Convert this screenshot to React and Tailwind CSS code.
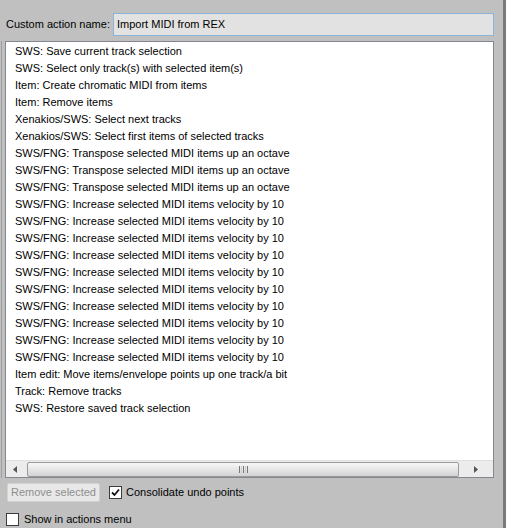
import React from "react";

const actions = [
  "SWS: Save current track selection",
  "SWS: Select only track(s) with selected item(s)",
  "Item: Create chromatic MIDI from items",
  "Item: Remove items",
  "Xenakios/SWS: Select next tracks",
  "Xenakios/SWS: Select first items of selected tracks",
  "SWS/FNG: Transpose selected MIDI items up an octave",
  "SWS/FNG: Transpose selected MIDI items up an octave",
  "SWS/FNG: Transpose selected MIDI items up an octave",
  "SWS/FNG: Increase selected MIDI items velocity by 10",
  "SWS/FNG: Increase selected MIDI items velocity by 10",
  "SWS/FNG: Increase selected MIDI items velocity by 10",
  "SWS/FNG: Increase selected MIDI items velocity by 10",
  "SWS/FNG: Increase selected MIDI items velocity by 10",
  "SWS/FNG: Increase selected MIDI items velocity by 10",
  "SWS/FNG: Increase selected MIDI items velocity by 10",
  "SWS/FNG: Increase selected MIDI items velocity by 10",
  "SWS/FNG: Increase selected MIDI items velocity by 10",
  "SWS/FNG: Increase selected MIDI items velocity by 10",
  "Item edit: Move items/envelope points up one track/a bit",
  "Track: Remove tracks",
  "SWS: Restore saved track selection",
];

function Checkbox({ checked }) {
  return (
    <div className="w-[13px] h-[13px] border border-[#3c3c3c] bg-white flex items-center justify-center shrink-0">
      {checked && (
        <svg width="9" height="9" viewBox="0 0 9 9">
          <path d="M1 4.5 L3.5 7 L8 1.5" stroke="#111" strokeWidth="1.8" fill="none" />
        </svg>
      )}
    </div>
  );
}

function HScrollbar() {
  return (
    <div className="h-[17px] flex items-center bg-[#ececec] border-t border-[#e0e0e0]">
      <div className="w-[17px] flex justify-center">
        <svg width="4" height="7" viewBox="0 0 4 7">
          <path d="M4 0 L0 3.5 L4 7 Z" fill="#555" />
        </svg>
      </div>
      <div className="ml-[4px] w-[432px] h-[15px] rounded-[2px] border border-[#9a9a9a] bg-gradient-to-b from-[#f6f6f6] via-[#e6e6e6] to-[#d2d2d2] flex items-center justify-center">
        <div className="flex gap-[1px]">
          <div className="w-[1px] h-[7px] bg-[#777]" />
          <div className="w-[1px] h-[7px] bg-[#ccc]" />
          <div className="w-[1px] h-[7px] bg-[#777]" />
          <div className="w-[1px] h-[7px] bg-[#ccc]" />
          <div className="w-[1px] h-[7px] bg-[#777]" />
        </div>
      </div>
      <div className="flex-1 flex justify-center">
        <svg width="4" height="7" viewBox="0 0 4 7">
          <path d="M0 0 L4 3.5 L0 7 Z" fill="#555" />
        </svg>
      </div>
    </div>
  );
}

export default function App() {
  return (
    <div
      className="w-[506px] h-[528px] bg-[#c0c0c0] border-r-[3px] border-[#7a7a7a] text-[11px] text-black overflow-hidden"
      style={{ fontFamily: '"Liberation Sans", Arial, sans-serif' }}
    >
      <div className="flex items-center pt-[13px]">
        <span className="pl-[6px] w-[113px] leading-[23px] whitespace-nowrap">Custom action name:</span>
        <div className="w-[381px] h-[23px] border border-[#8cb4d8] bg-[#e2e2e2] pl-[3px] leading-[21px] whitespace-nowrap">
          Import MIDI from REX
        </div>
      </div>

      <div className="mt-[5px] ml-[1px] border-l border-[#9e9e9e] pl-[3px] w-[494px]">
        <div className="w-[489px] h-[437px] border border-[#828790] bg-white flex flex-col">
          <div className="flex-1 pt-[1px] pl-[9px]">
            {actions.map((a, i) => (
              <div key={i} className="leading-[17px] whitespace-nowrap">
                {a}
              </div>
            ))}
          </div>
          <HScrollbar />
        </div>
      </div>

      <div className="flex items-center mt-[5px] ml-[7px]">
        <div className="w-[93px] h-[19px] border border-[#d2d2d2] bg-[#e8e8e8] rounded-[2px] text-[#8e8e8e] flex items-center justify-center whitespace-nowrap">
          Remove selected
        </div>
        <div className="ml-[9px]">
          <Checkbox checked />
        </div>
        <span className="ml-[4px] whitespace-nowrap">Consolidate undo points</span>
      </div>

      <div className="flex items-center mt-[9px] ml-[6px]">
        <Checkbox />
        <span className="ml-[5px] whitespace-nowrap">Show in actions menu</span>
      </div>
    </div>
  );
}
